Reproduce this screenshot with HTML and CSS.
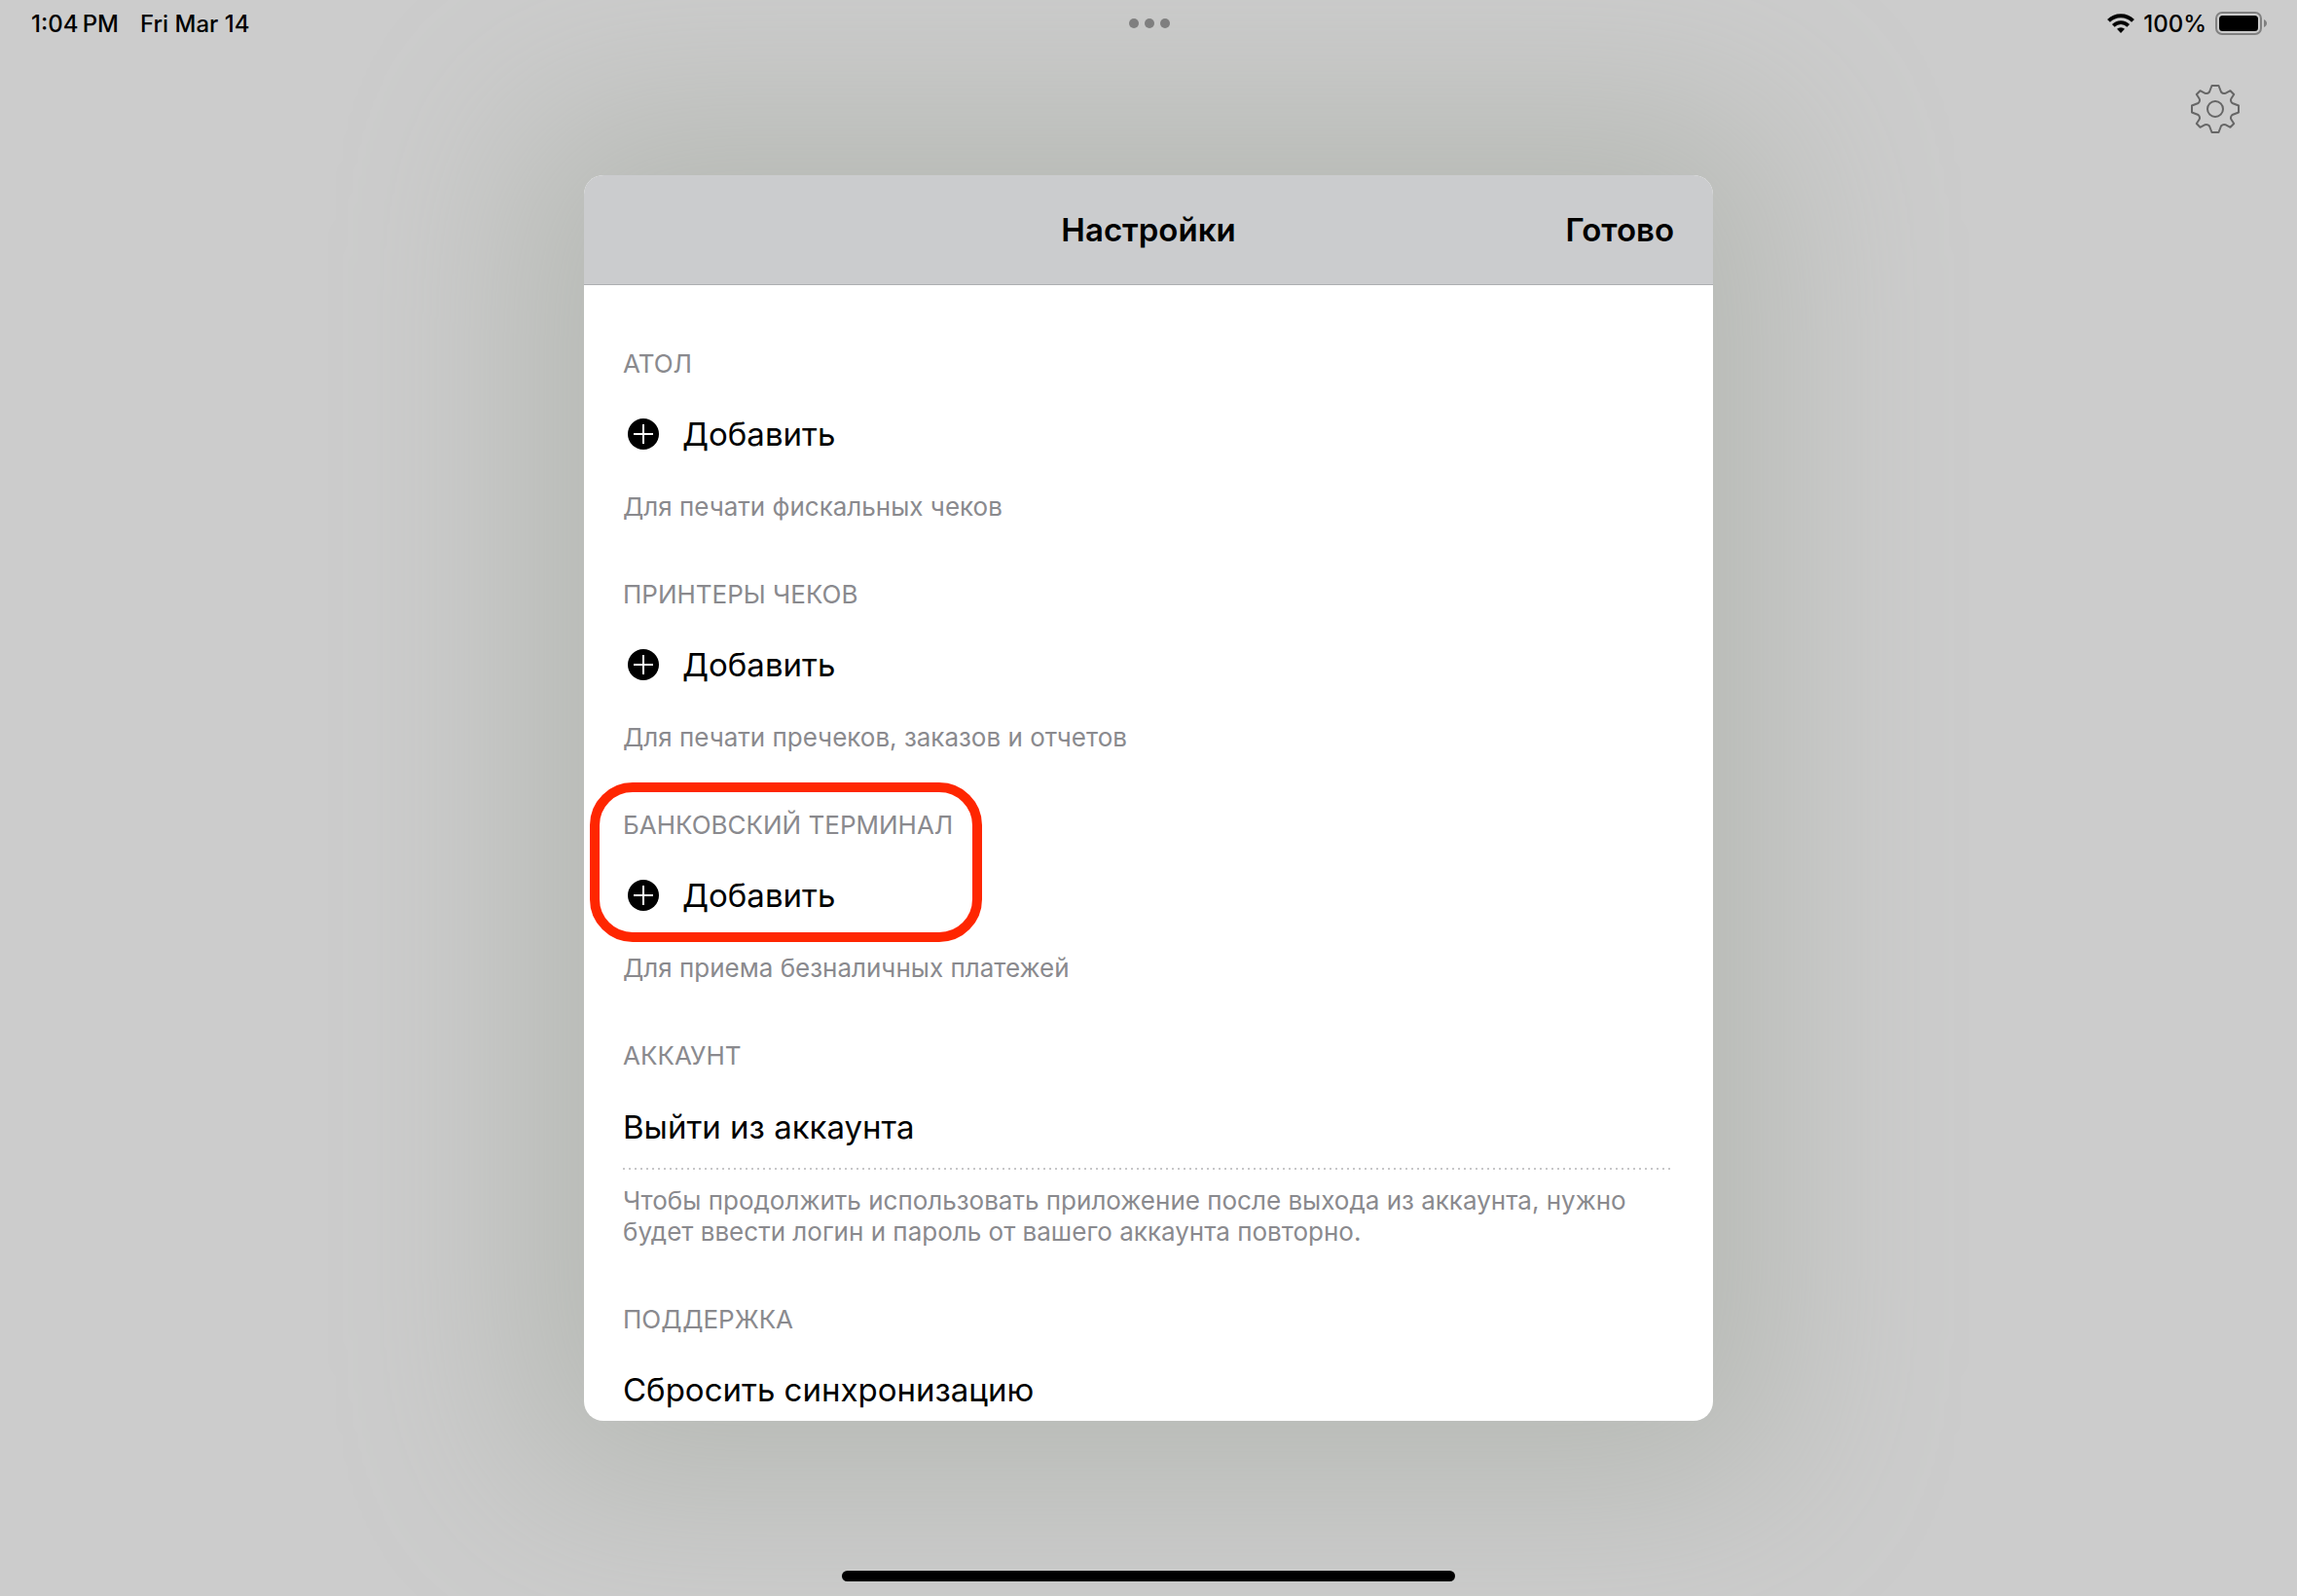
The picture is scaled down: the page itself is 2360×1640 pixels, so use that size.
FILE: index.html
```html
<!DOCTYPE html>
<html lang="ru">
  <head>
    <meta charset="UTF-8">
    <meta name="viewport" content="width=device-width, initial-scale=1.0">
    <title>Настройки</title>
    <link rel="stylesheet" href="styles.css">
  </head>
  <body>
    <header class="status-bar">
      <div class="status-left">
        <span>1:04&#8201;PM</span>
        <span>Fri Mar 14</span>
      </div>
      <div class="dots"><i></i><i></i><i></i></div>
      <div class="status-right">
        <svg class="wifi" viewBox="0 0 28 20">
          <path d="M1.500 7.400a17.500 17.500 0 0 1 25 0" fill="none" stroke="#000" stroke-width="4"/>
          <path d="M6.300 12.300a10.800 10.800 0 0 1 15.400 0" fill="none" stroke="#000" stroke-width="3.800"/>
          <path d="M14 20l-4-4.200a5.800 5.800 0 0 1 8 0z"/>
        </svg>
        <span>100%</span>
        <svg class="battery" viewBox="0 0 54 24">
          <rect x="1" y="1" width="46" height="22" rx="6" fill="none" stroke="#808080" stroke-width="2"/>
          <rect x="4" y="4" width="40" height="16" rx="3.500"/>
          <path d="M50 8c4 1.500 4 6.500 0 8z" fill="#808080"/>
        </svg>
      </div>
    </header>

    <div class="toolbar">
      <button class="gear" type="button" aria-label="Настройки">
        <svg viewBox="-26 -26 52 52" fill="none" stroke="#666" stroke-width="2" stroke-linejoin="round">
          <circle r="8"/>
          <path d="M-3.500-24H3.500L6-17.500Q8-15.200 10.500-16.200L15.500-18.800L19.200-15L16.300-10.500Q15.300-8 17.500-6L24-3.500V3.500L17.500 6Q15.300 8 16.300 10.500L19.200 15L15.500 18.800L10.500 16.200Q8 15.200 6 17.500L3.500 24H-3.500L-6 17.500Q-8 15.200-10.500 16.200L-15.500 18.800L-19.200 15L-16.300 10.500Q-15.300 8-17.500 6L-24 3.500V-3.500L-17.500-6Q-15.300-8-16.300-10.500L-19.200-15L-15.500-18.800L-10.500-16.200Q-8-15.200-6-17.500Z"/>
        </svg>
      </button>
    </div>

    <main class="modal">
      <div class="modal-header">
        <h1>Настройки</h1>
        <button class="done" type="button">Готово</button>
      </div>
      <div class="modal-body">
        <section class="group">
          <h2>АТОЛ</h2>
          <button class="row" type="button">
            <svg class="plus" viewBox="0 0 32 32"><circle cx="16" cy="16" r="16"/><path d="M6 16h20M16 6v20" stroke="#fff" stroke-width="2"/></svg>
            Добавить
          </button>
          <p>Для печати фискальных чеков</p>
        </section>
        <section class="group">
          <h2>ПРИНТЕРЫ ЧЕКОВ</h2>
          <button class="row" type="button">
            <svg class="plus" viewBox="0 0 32 32"><circle cx="16" cy="16" r="16"/><path d="M6 16h20M16 6v20" stroke="#fff" stroke-width="2"/></svg>
            Добавить
          </button>
          <p>Для печати пречеков, заказов и отчетов</p>
        </section>
        <section class="group marked">
          <h2>БАНКОВСКИЙ ТЕРМИНАЛ</h2>
          <button class="row" type="button">
            <svg class="plus" viewBox="0 0 32 32"><circle cx="16" cy="16" r="16"/><path d="M6 16h20M16 6v20" stroke="#fff" stroke-width="2"/></svg>
            Добавить
          </button>
          <p>Для приема безналичных платежей</p>
        </section>
        <section class="group">
          <h2>АККАУНТ</h2>
          <button class="row dotted" type="button">Выйти из аккаунта</button>
          <p>Чтобы продолжить использовать приложение после выхода из аккаунта, нужно будет ввести логин и пароль от вашего аккаунта повторно.</p>
        </section>
        <section class="group">
          <h2>ПОДДЕРЖКА</h2>
          <button class="row" type="button">Сбросить синхронизацию</button>
        </section>
      </div>
    </main>

    <div class="home-indicator"></div>
  </body>
</html>
```
FILE: styles.css
```css
*, *::before {
  box-sizing: border-box;
}
body {
  margin: 0;
  height: 100vh;
  display: flex;
  flex-direction: column;
  align-items: center;
  overflow: hidden;
  background: #cccccc;
  color: #000;
  font-family: Inter, "Liberation Sans", sans-serif;
}
h1, h2, p {
  margin: 0;
}
button {
  border: 0;
  padding: 0;
  background: none;
  color: inherit;
  font-family: inherit;
  cursor: pointer;
}
svg {
  display: block;
}

/* status bar */
.status-bar {
  position: relative;
  z-index: 1;
  width: 100%;
  height: 48px;
  padding: 0 30px;
  display: flex;
  align-items: center;
  font-size: 24px;
  font-weight: 500;
}
.status-left {
  flex: 1;
  padding-left: 2px;
  display: flex;
  gap: 22px;
}
.status-right {
  flex: 1;
  display: flex;
  justify-content: flex-end;
  align-items: center;
  gap: 9px;
}
.dots {
  display: flex;
  gap: 6px;
}
.dots i {
  width: 10px;
  height: 10px;
  border-radius: 50%;
  background: #7f7f7f;
}
.wifi {
  width: 28px;
  height: 20px;
}
.battery {
  width: 54px;
  height: 24px;
}

/* toolbar */
.toolbar {
  position: relative;
  z-index: 1;
  width: 100%;
  height: 132px;
  padding: 38px 58px 0;
  display: flex;
  justify-content: flex-end;
  align-items: flex-start;
}
.gear svg {
  width: 52px;
  height: 52px;
}

/* modal */
.modal {
  width: 1160px;
  max-width: 100%;
  flex: 1;
  min-height: 0;
  display: flex;
  flex-direction: column;
  overflow: hidden;
  background: #fff;
  border-radius: 20px;
  box-shadow: 0 0 190px 64px #b6b9b4;
}
.modal-header {
  flex: none;
  height: 113px;
  padding: 0 40px;
  display: grid;
  grid-template-columns: 1fr auto 1fr;
  align-items: center;
  background: #cbccce;
  border-bottom: 1px solid #adaeb1;
}
.modal-header h1 {
  grid-column: 2;
  font-size: 33px;
  font-weight: 600;
}
.done {
  justify-self: end;
  font-size: 33px;
  font-weight: 600;
}
.modal-body {
  padding: 65px 40px 0;
}
.group {
  margin-bottom: 58px;
}
.group h2,
.group p {
  color: #8a8a8e;
  font-size: 26px;
  font-weight: 400;
  line-height: 32px;
}
.group p {
  margin-top: 16px;
}
.row {
  width: 100%;
  height: 86px;
  margin-top: 13px;
  display: flex;
  align-items: center;
  font-size: 33px;
  text-align: left;
}
.dotted {
  height: 88px;
  background: repeating-linear-gradient(to right, #c6c6c8 0 2px, #fff 2px 6px) bottom / 100% 2px no-repeat;
}
.plus {
  width: 32px;
  height: 32px;
  margin: 0 24px 0 5px;
}

/* red outline round the terminal block */
.marked {
  position: relative;
}
.marked::before {
  content: "";
  position: absolute;
  top: -28px;
  left: -34px;
  width: 403px;
  height: 164px;
  border: 10px solid #ff2600;
  border-radius: 44px;
  pointer-events: none;
}

.home-indicator {
  position: relative;
  z-index: 1;
  flex: none;
  width: 630px;
  height: 11px;
  margin: 154px 0 15px;
  border-radius: 6px;
  background: #000;
}
```
